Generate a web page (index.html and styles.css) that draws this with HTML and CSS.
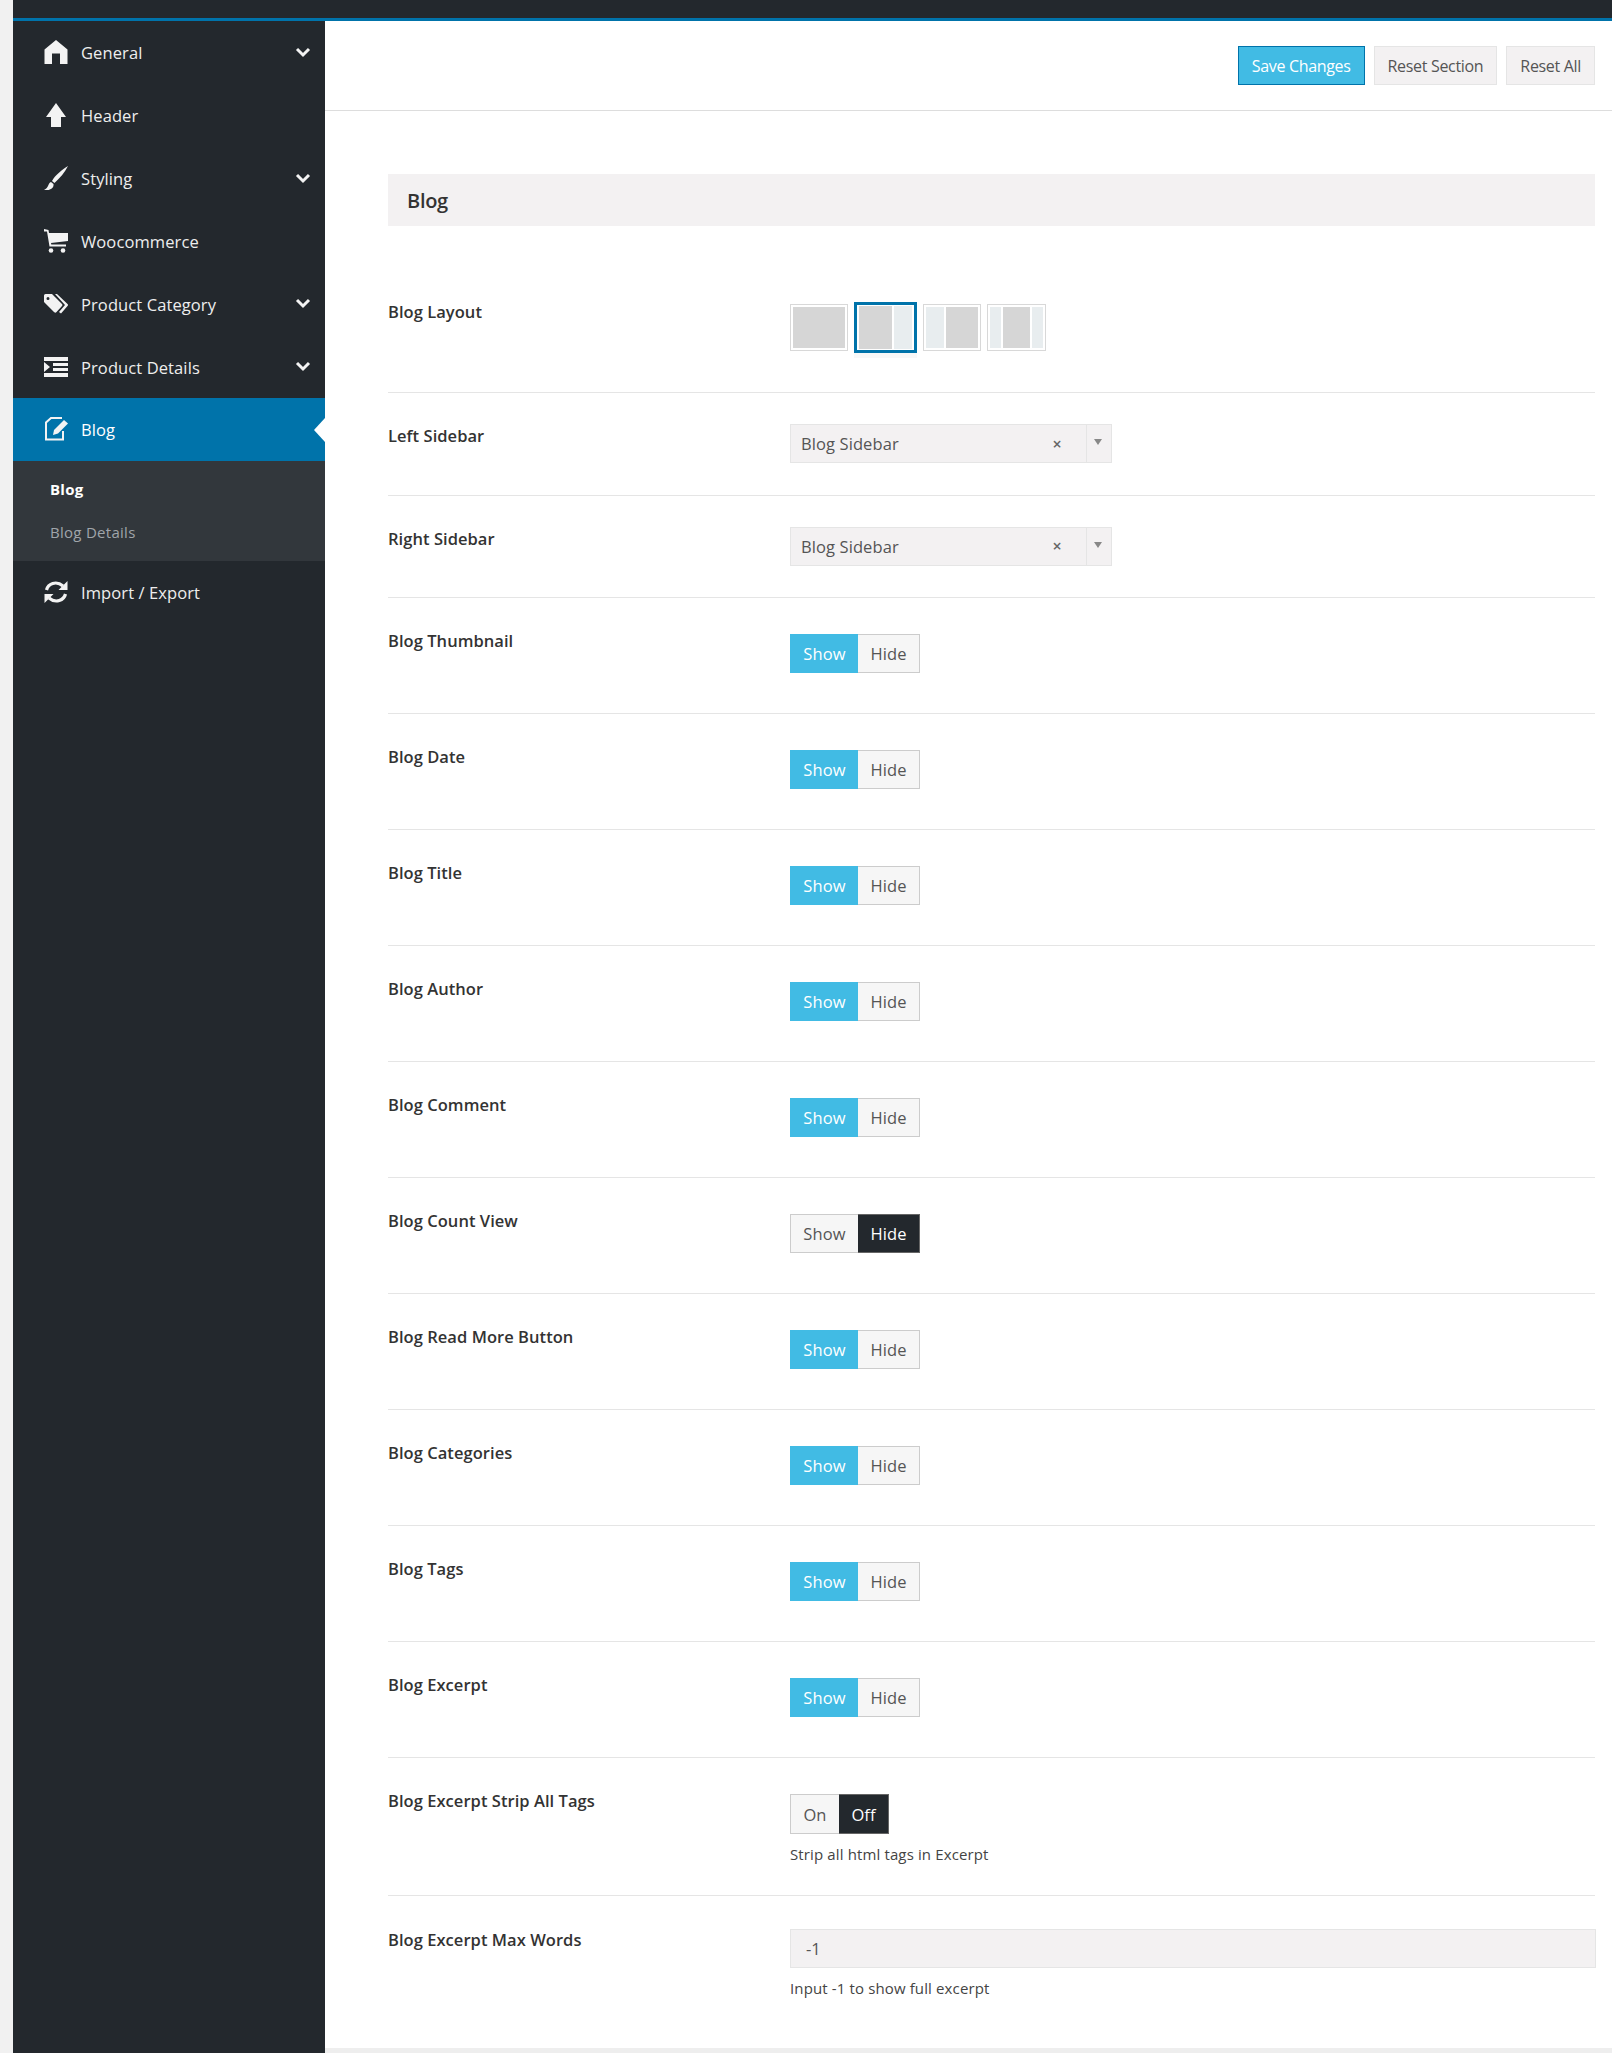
FILE: index.html
```html
<!DOCTYPE html>
<html lang="en">
<head>
  <meta charset="UTF-8" />
  <title>Theme Options - Blog</title>
  <link rel="stylesheet" href="styles.css">
</head>
<body>
  <div class="topbar"></div>
  <div class="layout">
    <nav class="sidebar">
      <a class="nav-item">
        <svg class="nav-icon" viewBox="0 0 24 24"><path d="M12 0 L23.5 9.5 V24 H16 V13.500 H8 V24 H.5 V9.500 Z"/></svg>
        <span>General</span>
        <svg class="chevron" viewBox="0 0 16 11"><path d="M2 2 L8 8 L14 2"/></svg>
      </a>
      <a class="nav-item">
        <svg class="nav-icon" viewBox="0 0 24 24"><path d="M12 0 L22 14 H17 V24 H7 V14 H2 Z"/></svg>
        <span>Header</span>
      </a>
      <a class="nav-item">
        <svg class="nav-icon" viewBox="0 0 24 24"><path d="M24 0 C19 3 11 9 8 15 L10.500 17 C16 12 21 6 24 0 Z M7 16 C4 16.500 5 22 0 24 C5 24.500 10 23 9.500 18 Z"/></svg>
        <span>Styling</span>
        <svg class="chevron" viewBox="0 0 16 11"><path d="M2 2 L8 8 L14 2"/></svg>
      </a>
      <a class="nav-item">
        <svg class="nav-icon" viewBox="0 0 24 24"><path d="M0 0 L4.500 1 L5 4 H24 V12 L7 14 L7.300 15.500 H22 V17.500 H5.500 L3 2.500 H0 Z"/><circle cx="7" cy="21.500" r="2.300"/><circle cx="19" cy="21.500" r="2.300"/></svg>
        <span>Woocommerce</span>
      </a>
      <a class="nav-item">
        <svg class="nav-icon" viewBox="0 0 24 24"><path fill-rule="evenodd" d="M0 3.500 Q0 2 1.500 2 H8 L18 12 Q19 13 18 14 L12.500 20 Q11.500 21.500 10 20 L0 10 Z M4 5 A1.500 1.500 0 1 0 4 8 A1.500 1.500 0 1 0 4 5 Z"/><path d="M11 2 H13 L23.500 12 Q24.500 13 23.500 14 L17 21.500 L15 20 L21 13 Z"/></svg>
        <span>Product Category</span>
        <svg class="chevron" viewBox="0 0 16 11"><path d="M2 2 L8 8 L14 2"/></svg>
      </a>
      <a class="nav-item">
        <svg class="nav-icon" viewBox="0 0 24 24"><path d="M0 2 H24 V6 H0 Z M9 8 H24 V11 H9 Z M9 13 H24 V16 H9 Z M0 18 H24 V22 H0 Z M0 7 L6 12 L0 17 Z"/></svg>
        <span>Product Details</span>
        <svg class="chevron" viewBox="0 0 16 11"><path d="M2 2 L8 8 L14 2"/></svg>
      </a>
      <a class="nav-item active">
        <svg class="nav-icon" viewBox="0 0 24 24"><path class="outline" d="M19 14 V22.500 H2 V5.500 L7 1 H18"/><path d="M20 3 L24 6.500 L14 16.500 L9 18 L10 13 Z"/></svg>
        <span>Blog</span>
      </a>
      <div class="submenu">
        <a class="sub-item current">Blog</a>
        <a class="sub-item">Blog Details</a>
      </div>
      <a class="nav-item">
        <svg class="nav-icon" viewBox="0 0 24 24"><path class="outline wide" d="M2.500 10 C4 4 12 0 19 6 M21.500 14 C20 20 12 24 5 18"/><path d="M23.500 1 V10 H14.500 Z M.5 23 V14 H9.500 Z"/></svg>
        <span>Import / Export</span>
      </a>
    </nav>

    <main class="content">
      <div class="actions">
        <button class="btn btn-primary">Save Changes</button>
        <button class="btn">Reset Section</button>
        <button class="btn">Reset All</button>
      </div>

      <div class="panel">
        <h2 class="panel-title">Blog</h2>

        <div class="row row-layout">
          <div class="label">Blog Layout</div>
          <div class="layouts">
            <div class="layout-box"><i class="main"></i></div>
            <div class="layout-box selected"><i class="main"></i><i class="side"></i></div>
            <div class="layout-box"><i class="side"></i><i class="main"></i></div>
            <div class="layout-box wide"><i class="side"></i><i class="main"></i><i class="side"></i></div>
          </div>
        </div>

        <div class="row row-select">
          <div class="label">Left Sidebar</div>
          <div class="select">
            <span class="select-value">Blog Sidebar</span>
            <span class="select-clear">×</span>
            <span class="select-arrow"></span>
          </div>
        </div>

        <div class="row row-select">
          <div class="label">Right Sidebar</div>
          <div class="select">
            <span class="select-value">Blog Sidebar</span>
            <span class="select-clear">×</span>
            <span class="select-arrow"></span>
          </div>
        </div>

        <div class="row">
          <div class="label">Blog Thumbnail</div>
          <div class="toggle"><span class="on">Show</span><span>Hide</span></div>
        </div>
        <div class="row">
          <div class="label">Blog Date</div>
          <div class="toggle"><span class="on">Show</span><span>Hide</span></div>
        </div>
        <div class="row">
          <div class="label">Blog Title</div>
          <div class="toggle"><span class="on">Show</span><span>Hide</span></div>
        </div>
        <div class="row">
          <div class="label">Blog Author</div>
          <div class="toggle"><span class="on">Show</span><span>Hide</span></div>
        </div>
        <div class="row">
          <div class="label">Blog Comment</div>
          <div class="toggle"><span class="on">Show</span><span>Hide</span></div>
        </div>
        <div class="row">
          <div class="label">Blog Count View</div>
          <div class="toggle"><span>Show</span><span class="off">Hide</span></div>
        </div>
        <div class="row">
          <div class="label">Blog Read More Button</div>
          <div class="toggle"><span class="on">Show</span><span>Hide</span></div>
        </div>
        <div class="row">
          <div class="label">Blog Categories</div>
          <div class="toggle"><span class="on">Show</span><span>Hide</span></div>
        </div>
        <div class="row">
          <div class="label">Blog Tags</div>
          <div class="toggle"><span class="on">Show</span><span>Hide</span></div>
        </div>
        <div class="row">
          <div class="label">Blog Excerpt</div>
          <div class="toggle"><span class="on">Show</span><span>Hide</span></div>
        </div>

        <div class="row row-help">
          <div class="label">Blog Excerpt Strip All Tags</div>
          <div>
            <div class="toggle toggle-small"><span>On</span><span class="off">Off</span></div>
            <p class="help">Strip all html tags in Excerpt</p>
          </div>
        </div>

        <div class="row row-last">
          <div class="label">Blog Excerpt Max Words</div>
          <div>
            <div class="text-input">-1</div>
            <p class="help">Input -1 to show full excerpt</p>
          </div>
        </div>
      </div>
    </main>
  </div>
</body>
</html>
```

FILE: styles.css
```css
* {
  box-sizing: border-box;
}
html, body {
  height: 100%;
}
body {
  margin: 0;
  padding-left: 13px;
  background-color: #f1f1f1;
  color: #3a3a3a;
  font-family: "Open Sans", sans-serif;
  font-size: 15px;
  display: flex;
  flex-direction: column;
  overflow: hidden;
}

.topbar {
  height: 21px;
  flex-shrink: 0;
  background-color: #23282d;
  border-bottom: 3px solid #0073aa;
}
.layout {
  display: flex;
  flex: 1;
  min-height: 0;
}

/* sidebar */
.sidebar {
  width: 312px;
  flex-shrink: 0;
  background-color: #23282d;
}
.nav-item {
  position: relative;
  display: flex;
  align-items: center;
  height: 62.830px;
  padding-left: 31px;
  color: #eee;
  font-size: 16.500px;
  letter-spacing: 0.1px;
}
.nav-item span {
  padding-top: 1px;
}
.nav-icon {
  width: 24px;
  height: 24px;
  margin-right: 13px;
  fill: #f3f3f3;
  flex-shrink: 0;
}
.outline {
  fill: none;
  stroke: #f3f3f3;
  stroke-width: 2;
}
.outline.wide {
  stroke-width: 3.200;
}
.chevron {
  position: absolute;
  right: 14px;
  top: 26px;
  width: 16px;
  height: 11px;
  fill: none;
  stroke: #f3f3f3;
  stroke-width: 3;
}
.nav-item.active {
  background-color: #0073aa;
  color: #fff;
}
.nav-item.active::after {
  content: "";
  position: absolute;
  right: 0;
  top: 20px;
  border-style: solid;
  border-width: 12px 11px 12px 0;
  border-color: transparent #fff transparent transparent;
}
.submenu {
  height: 100px;
  padding-top: 7px;
  background-color: #32373c;
}
.sub-item {
  display: block;
  height: 43px;
  line-height: 43px;
  padding-left: 37px;
  color: #a0a5aa;
  font-size: 15px;
  letter-spacing: 0.28px;
}
.sub-item.current {
  color: #fff;
  font-weight: 700;
}

/* main */
.content {
  flex: 1;
  min-width: 0;
  background-color: #fff;
  border-bottom: 5px solid #eee;
}
.actions {
  display: flex;
  justify-content: flex-end;
  gap: 9px;
  height: 90px;
  padding: 25px 17px 0 0;
  border-bottom: 1px solid #ddd;
}
.btn {
  height: 39px;
  padding: 0 13px;
  background-color: #f3f1f2;
  border: 1px solid #e5e5e5;
  color: #555;
  font-family: inherit;
  font-size: 16px;
  letter-spacing: -0.32px;
}
.btn-primary {
  background-color: #41bbe4;
  border-color: #0073aa;
  color: #fff;
}
.panel {
  padding: 63px 17px 0 63px;
}
.panel-title {
  height: 52px;
  margin: 0;
  padding-left: 19px;
  background-color: #f3f1f2;
  color: #333;
  font-size: 20px;
  font-weight: 600;
  letter-spacing: -0.3px;
  line-height: 54px;
}
.row {
  display: grid;
  grid-template-columns: 402px 1fr;
  height: 116px;
  padding-top: 36px;
  border-bottom: 1px solid #e5e5e5;
}
.label {
  color: #333;
  font-size: 16.500px;
  font-weight: 600;
  letter-spacing: 0.05px;
  line-height: 20px;
  margin-top: -3px;
}

/* layout picker */
.row-layout {
  height: 167px;
  padding-top: 78px;
}
.row-layout .label {
  margin-top: -2px;
}
.layouts {
  display: flex;
  gap: 6px;
  align-items: flex-start;
}
.layout-box {
  display: flex;
  gap: 2px;
  width: 58px;
  height: 47px;
  padding: 2px;
  border: 1px solid #d8d8d8;
}
.layout-box.wide {
  width: 59px;
}
.layout-box i {
  display: block;
}
.layout-box .main {
  flex: 1;
  background-color: #d6d6d6;
}
.layout-box .side {
  width: 18px;
  background-color: #e8edef;
}
.layout-box.wide .side {
  width: 11px;
}
.layout-box.selected {
  width: 63px;
  height: 51px;
  margin: -2px 0 0 0;
  padding: 1px 2px;
  border: 3px solid #0073aa;
  box-shadow: 0 5px 0 #f8f8f8;
}

/* select */
.row-select {
  height: 102.500px;
  padding-top: 31px;
}
.row-select .label {
  margin-top: 2px;
}
.select {
  display: flex;
  align-items: center;
  width: 322px;
  height: 39px;
  padding-left: 10px;
  background-color: #f3f1f2;
  border: 1px solid #e5e5e5;
  color: #555;
  font-size: 16.500px;
  letter-spacing: 0.1px;
}
.select-value {
  flex: 1;
}
.select-clear {
  width: 30px;
  font-size: 16px;
  color: #666;
  text-align: center;
  margin-right: 14px;
  letter-spacing: 0;
  font-weight: 600;
}
.select-arrow {
  position: relative;
  width: 25px;
  height: 100%;
  border-left: 1px solid #e5e5e5;
}
.select-arrow::after {
  content: "";
  position: absolute;
  left: 7px;
  top: 14px;
  border-style: solid;
  border-width: 6px 4px 0 4px;
  border-color: #888 transparent transparent transparent;
}

/* show / hide switch */
.toggle {
  display: inline-flex;
  height: 39px;
  color: #555;
  font-size: 16.500px;
  letter-spacing: 0.1px;
}
.toggle span {
  display: flex;
  align-items: center;
  justify-content: center;
  width: 62px;
  background-color: #f6f6f6;
  border: 1px solid #ccc;
}
.toggle span:first-child {
  width: 68px;
  border-right: 0;
}
.toggle span:last-child {
  border-left: 0;
}
.toggle .on {
  background-color: #41bbe4;
  border-color: #41bbe4;
  color: #fff;
}
.toggle .off {
  background-color: #23282d;
  border-color: #666;
  color: #fff;
}
.toggle-small {
  height: 40px;
}
.toggle-small span,
.toggle-small span:first-child {
  width: 49px;
}
.toggle-small span:last-child {
  width: 50px;
}

/* text field */
.row-help {
  height: 138px;
}
.row-last {
  height: 153px;
  padding-top: 33px;
  border-bottom: 0;
}
.row-last .label {
  margin-top: 1px;
}
.text-input {
  width: 806px;
  height: 39px;
  padding-left: 15px;
  background-color: #f3f1f2;
  border: 1px solid #e5e5e5;
  color: #555;
  font-size: 16.500px;
  line-height: 38px;
}
.help {
  margin: 10px 0 0;
  color: #444;
  font-size: 15px;
  line-height: 20px;
  letter-spacing: 0.13px;
}
```
